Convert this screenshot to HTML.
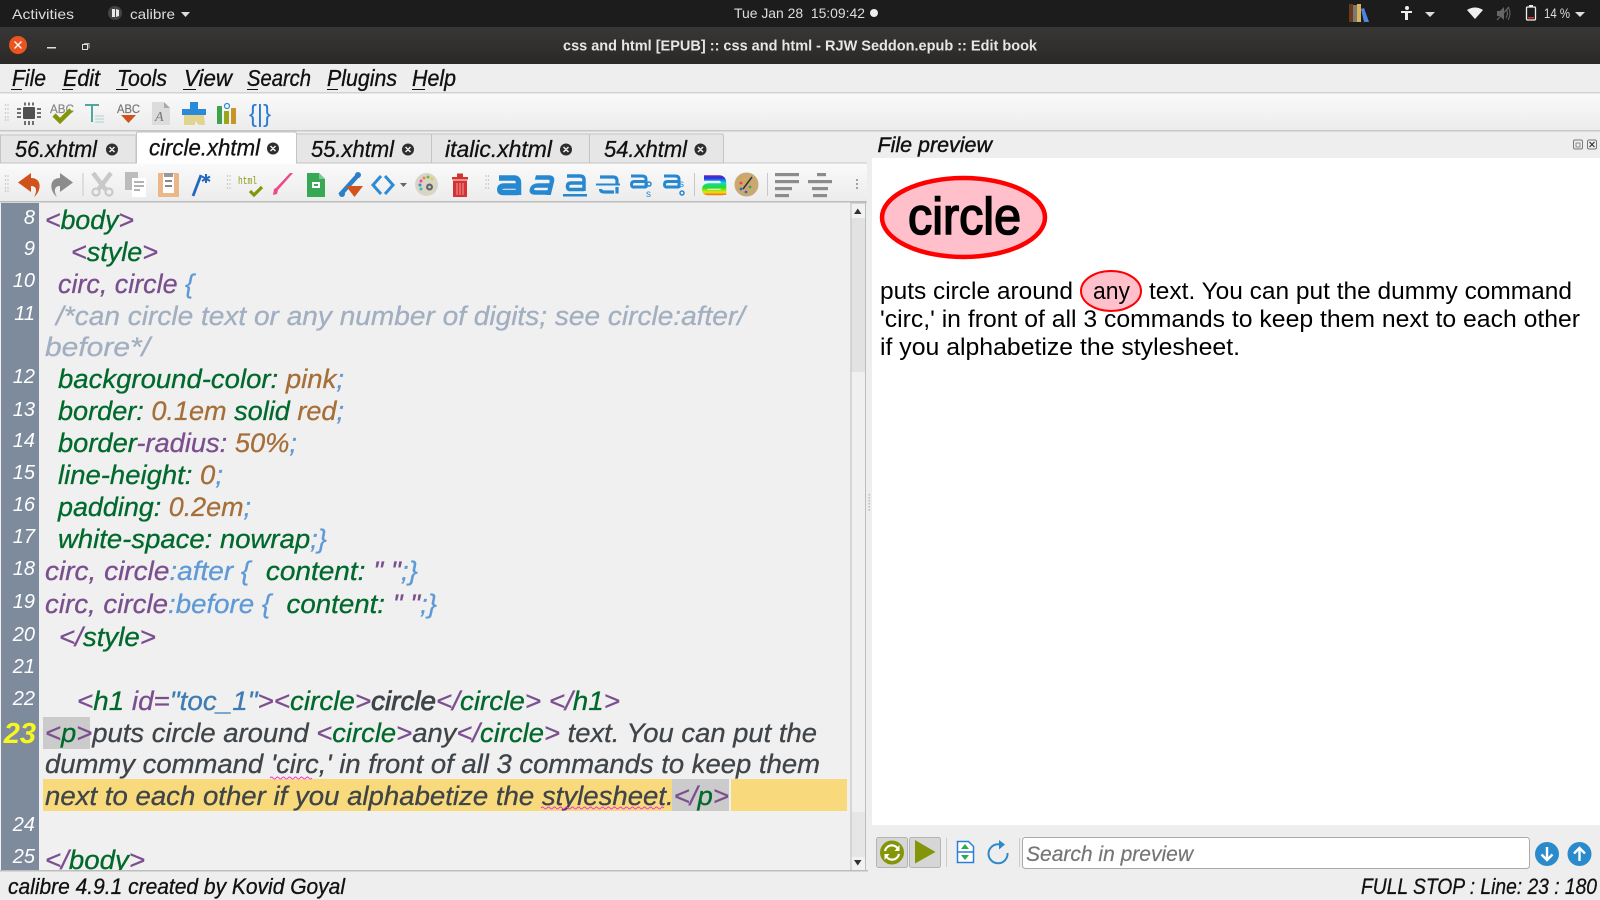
<!DOCTYPE html>
<html><head><meta charset="utf-8"><style>
html,body{margin:0;padding:0;width:1600px;height:900px;overflow:hidden;background:#eee}
svg{display:block;font-family:"Liberation Sans",sans-serif}
text{white-space:pre}
.m{font-style:italic;font-size:23px;fill:#111;stroke:#111;stroke-width:.35}
.c{font-style:italic;font-size:27px;fill:#3f4448;stroke:#3f4448;stroke-width:.3}
.n{font-style:italic;font-size:20px;fill:#fff}
.t{font-style:italic;font-size:23px;fill:#111;stroke:#111;stroke-width:.3}
.p{font-size:24px;fill:#000}
.top{font-size:14px;fill:#ddd}
.g{fill:#00692b;stroke:#00692b}.u{fill:#7b4f8f;stroke:#7b4f8f}.b{fill:#a66f3a;stroke:#a66f3a}.l{fill:#5f9ad6;stroke:#5f9ad6}.k{fill:#a2afc0;stroke:#a2afc0}.d{fill:#3f4448;stroke:#3f4448}.v{fill:#3d7db3;stroke:#3d7db3}
.a{fill:none;stroke:#2788d2}
</style></head><body>
<svg width="1600" height="900" viewBox="0 0 1600 900" xmlns="http://www.w3.org/2000/svg">
<defs>
<linearGradient id="tb" x1="0" y1="0" x2="0" y2="1"><stop offset="0" stop-color="#fafafa"/><stop offset="1" stop-color="#ececec"/></linearGradient>
<linearGradient id="tt" x1="0" y1="0" x2="0" y2="1"><stop offset="0" stop-color="#393735"/><stop offset="1" stop-color="#2a2927"/></linearGradient>
<linearGradient id="rb" gradientUnits="userSpaceOnUse" x1="0" y1="173" x2="0" y2="197"><stop offset="0" stop-color="#e0108c"/><stop offset=".2" stop-color="#2030e0"/><stop offset=".4" stop-color="#10d0e0"/><stop offset=".6" stop-color="#20e020"/><stop offset=".8" stop-color="#f0e010"/><stop offset="1" stop-color="#f02010"/></linearGradient>
<linearGradient id="sp" x1="0" y1="0" x2="1" y2="0"><stop offset="0" stop-color="#e6e6e6"/><stop offset=".5" stop-color="#fafafa"/><stop offset="1" stop-color="#e6e6e6"/></linearGradient>
</defs>
<rect width="1600" height="900" fill="#eee"/>

<!-- top bar -->
<rect width="1600" height="27" fill="#1c1c1c"/>
<text class="top" x="12" y="19" textLength="62" lengthAdjust="spacingAndGlyphs">Activities</text>
<circle cx="115" cy="13" r="7" fill="#444"/><path d="M112 9h3v8h-3zM116 9l3 1v6l-3 1z" fill="#e8e8e8"/>
<text class="top" x="130" y="19" textLength="45" lengthAdjust="spacingAndGlyphs">calibre</text>
<path d="M181 12h9l-4.500 5z" fill="#ddd"/>
<text class="top" x="734" y="18" textLength="131" lengthAdjust="spacingAndGlyphs">Tue Jan 28  15:09:42</text>
<circle cx="874" cy="13" r="4" fill="#eee"/>
<rect x="1349" y="4" width="4" height="18" fill="#6b3a1a"/><rect x="1353" y="5" width="4" height="17" fill="#7a7a70"/><rect x="1357" y="4" width="4" height="18" fill="#d9b45a"/><path d="M1361 9l3-1 5 14h-5z" fill="#4d86e0"/>
<circle cx="1407" cy="8" r="2" fill="#eee"/><path d="M1401 11h11v2h-4v7h-3v-7h-4z" fill="#eee"/>
<path d="M1425 12h10l-5 5z" fill="#ddd"/>
<path d="M1467 10q8-5 16 0l-8 9z" fill="#eee"/>
<path d="M1497 11h3l4-4v13l-4-4h-3z" fill="#666"/><path d="M1506 9q3 4 0 9M1508 7q4 6 0 13" stroke="#666" stroke-width="1" fill="none"/><path d="M1497 20l12-13" stroke="#666" stroke-width="1.200"/>
<rect x="1526.500" y="7" width="9" height="13" rx="1" fill="none" stroke="#eee" stroke-width="1.300"/><rect x="1529" y="5" width="4" height="2" fill="#eee"/><rect x="1528" y="17" width="6" height="1.500" fill="#e03020"/>
<text class="top" x="1544" y="18" textLength="26" lengthAdjust="spacingAndGlyphs">14 %</text>
<path d="M1575 12h10l-5 5z" fill="#ddd"/>

<!-- title bar -->
<rect y="27" width="1600" height="37" fill="url(#tt)"/>
<circle cx="18" cy="45" r="9" fill="#e95420"/><path d="M14.500 41.500l7 7m0-7l-7 7" stroke="#fff" stroke-width="1.300"/>
<rect x="47" y="47" width="9" height="1.500" fill="#ddd"/>
<rect x="82.500" y="44.500" width="5" height="5" fill="none" stroke="#ddd"/><path d="M84 43.500h5v5" fill="none" stroke="#ddd" stroke-width=".8"/>
<text x="563" y="50.500" font-size="14.500" font-weight="bold" fill="#e6e6e6" textLength="474" lengthAdjust="spacingAndGlyphs">css and html [EPUB] :: css and html - RJW Seddon.epub :: Edit book</text>

<!-- menu -->
<rect y="64" width="1600" height="28" fill="#eeeeee"/>
<rect y="92" width="1600" height="1.500" fill="#d2d2d2"/>
<text class="m" x="12" y="86" textLength="34" lengthAdjust="spacingAndGlyphs">File</text>
<text class="m" x="63" y="86" textLength="37" lengthAdjust="spacingAndGlyphs">Edit</text>
<text class="m" x="117" y="86" textLength="50" lengthAdjust="spacingAndGlyphs">Tools</text>
<text class="m" x="184" y="86" textLength="48" lengthAdjust="spacingAndGlyphs">View</text>
<text class="m" x="247" y="86" textLength="64" lengthAdjust="spacingAndGlyphs">Search</text>
<text class="m" x="327" y="86" textLength="70" lengthAdjust="spacingAndGlyphs">Plugins</text>
<text class="m" x="412" y="86" textLength="44" lengthAdjust="spacingAndGlyphs">Help</text>
<g fill="#111"><rect x="11" y="89" width="11" height="1"/><rect x="62" y="89" width="11" height="1"/><rect x="116" y="89" width="12" height="1"/><rect x="183" y="89" width="13" height="1"/><rect x="247" y="89" width="11" height="1"/><rect x="327" y="89" width="11" height="1"/><rect x="412" y="89" width="13" height="1"/></g>

<!-- toolbar 1 -->
<rect y="93.500" width="1600" height="36.500" fill="url(#tb)"/>
<rect y="130" width="1600" height="1.500" fill="#c8c8c8"/>
<g fill="#bbb"><circle cx="5.500" cy="105" r=".7"/><circle cx="8" cy="105" r=".7"/><circle cx="5.500" cy="109" r=".7"/><circle cx="8" cy="109" r=".7"/><circle cx="5.500" cy="113" r=".7"/><circle cx="8" cy="113" r=".7"/><circle cx="5.500" cy="117" r=".7"/><circle cx="8" cy="117" r=".7"/><circle cx="5.500" cy="120" r=".7"/><circle cx="8" cy="120" r=".7"/></g>
<rect x="23" y="107" width="12" height="12" rx="1" fill="#505050"/>
<path d="M17 109h4M17 113h4M17 117h4M37 109h4M37 113h4M37 117h4M25 102.500v3M29 102.500v3M33 102.500v3M25 121v4M29 121v4M33 121v4" stroke="#444" stroke-width="1.500" fill="none"/>
<text x="50" y="113" font-size="12" fill="#888" stroke="#888" stroke-width=".2" textLength="24" lengthAdjust="spacingAndGlyphs">ABC</text>
<path d="M54 115l6 6 11-11" stroke="#84950a" stroke-width="4.500" fill="none"/>
<path d="M85 105h14M92 105v17" stroke="#4da89e" stroke-width="2" fill="none"/><path d="M95 116h9M95 119h9M95 122h9" stroke="#a6d4cf" stroke-width="1" fill="none"/>
<text x="117" y="113" font-size="12" fill="#777" stroke="#777" stroke-width=".2" textLength="23" lengthAdjust="spacingAndGlyphs">ABC</text>
<path d="M121 115h15l-7.500 8z" fill="#d2521b"/>
<path d="M152 102h12l6 6v17h-18z" fill="#dcdcdc"/><path d="M164 102l6 6h-6z" fill="#aaa"/>
<text x="155" y="121" font-size="14" font-style="italic" font-family="Liberation Serif" fill="#777">A</text>
<path d="M190 102h8v7h8v6h-24v-6h8z" fill="#2b8ad8"/><path d="M184 115h20l1 10h-6l-4-4v4h-11z" fill="#e2d48f"/>
<rect x="217" y="106" width="5" height="18" rx=".5" fill="#3fa34d"/><rect x="224" y="111" width="5" height="13" rx=".5" fill="#9aa51a"/><rect x="231" y="108" width="5" height="16" rx=".5" fill="#c99429"/><circle cx="227" cy="106" r="2.500" fill="none" stroke="#2b8ad8" stroke-width="1.200"/>
<text x="249" y="122" font-size="25" fill="#2a7ad6" textLength="22" lengthAdjust="spacingAndGlyphs">{|}</text>

<!-- tabs -->
<rect y="131.500" width="867" height="31.500" fill="#eeeeee"/>
<rect y="162.500" width="867" height="1" fill="#c8c8c8"/>
<g fill="#e6e6e6" stroke="#c4c4c4"><path d="M.5 163v-28h135.500v28z"/><path d="M296.500 163v-28q0-1 1-1h133q1 0 1 1v28z"/><path d="M431.500 163v-28q0-1 1-1h156q1 0 1 1v28z"/><path d="M589.500 163v-28q0-1 1-1h131q2 0 2 2v27z"/></g>
<path d="M136.500 164v-31q0-1 2-1h156q2 0 2 2v30z" fill="#fff" stroke="#c4c4c4"/>
<text class="t" x="15" y="157" textLength="82" lengthAdjust="spacingAndGlyphs">56.xhtml</text>
<text class="t" x="149" y="155.500" textLength="111" lengthAdjust="spacingAndGlyphs">circle.xhtml</text>
<text class="t" x="311" y="157" textLength="83" lengthAdjust="spacingAndGlyphs">55.xhtml</text>
<text class="t" x="445" y="157" textLength="107" lengthAdjust="spacingAndGlyphs">italic.xhtml</text>
<text class="t" x="604" y="157" textLength="83" lengthAdjust="spacingAndGlyphs">54.xhtml</text>
<g fill="#2e2e2e"><circle cx="112" cy="149.500" r="6"/><circle cx="273" cy="148.500" r="6"/><circle cx="408" cy="149.500" r="6"/><circle cx="566" cy="149.500" r="6"/><circle cx="700.500" cy="149.500" r="6"/></g>
<g stroke="#eee" stroke-width="1.500"><path d="M109.500 147l5 5m0-5l-5 5M270.500 146l5 5m0-5l-5 5M405.500 147l5 5m0-5l-5 5M563.500 147l5 5m0-5l-5 5M698 147l5 5m0-5l-5 5"/></g>

<!-- File preview header -->
<text x="877.500" y="152" font-size="21" font-style="italic" fill="#111" stroke="#111" stroke-width=".45" textLength="114.500" lengthAdjust="spacingAndGlyphs">File preview</text>
<rect x="1573.500" y="140" width="9" height="9" rx="1.500" fill="none" stroke="#777"/><rect x="1576" y="143" width="4" height="4" fill="none" stroke="#777" stroke-width=".8"/>
<rect x="1587.500" y="140" width="9" height="9" rx="1.500" fill="none" stroke="#777"/><path d="M1589.500 142l5 5m0-5l-5 5" stroke="#333" stroke-width="1.200"/>

<!-- toolbar 2 -->
<rect y="163.500" width="867" height="37.500" fill="url(#tb)"/>
<rect y="201" width="867" height="1.500" fill="#bdbdbd"/>
<g fill="#bbb"><circle cx="5.500" cy="176" r=".7"/><circle cx="8" cy="176" r=".7"/><circle cx="5.500" cy="180" r=".7"/><circle cx="8" cy="180" r=".7"/><circle cx="5.500" cy="184" r=".7"/><circle cx="8" cy="184" r=".7"/><circle cx="5.500" cy="188" r=".7"/><circle cx="8" cy="188" r=".7"/><circle cx="5.500" cy="191" r=".7"/><circle cx="8" cy="191" r=".7"/>
<circle cx="227.500" cy="176" r=".7"/><circle cx="230" cy="176" r=".7"/><circle cx="227.500" cy="180" r=".7"/><circle cx="230" cy="180" r=".7"/><circle cx="227.500" cy="184" r=".7"/><circle cx="230" cy="184" r=".7"/><circle cx="227.500" cy="188" r=".7"/><circle cx="230" cy="188" r=".7"/>
<circle cx="486" cy="176" r=".7"/><circle cx="488.500" cy="176" r=".7"/><circle cx="486" cy="180" r=".7"/><circle cx="488.500" cy="180" r=".7"/><circle cx="486" cy="184" r=".7"/><circle cx="488.500" cy="184" r=".7"/><circle cx="486" cy="188" r=".7"/><circle cx="488.500" cy="188" r=".7"/></g>
<path d="M31 173L18 182.500 31 192V186C36 186 38 190 34 197 41 192 43 178 31 178Z" fill="#d0521b"/>
<path d="M60 173L73 182.500 60 192V186C55 186 53 190 57 197 50 192 48 178 60 178Z" fill="#8c8c8c"/>
<rect x="82.500" y="173" width="1" height="23" fill="#c8c8c8"/>
<path d="M93 173l13 17M111 173l-13 17" stroke="#c9c9c9" stroke-width="4.500" fill="none"/><circle cx="96" cy="192" r="3.500" fill="none" stroke="#c9c9c9" stroke-width="2.200"/><circle cx="109" cy="192" r="3.500" fill="none" stroke="#c9c9c9" stroke-width="2.200"/>
<rect x="125" y="172" width="13" height="18" fill="#bcbcbc"/><rect x="132" y="178" width="14" height="19" fill="#fff"/><path d="M134 182h10M134 186h10M134 190h6" stroke="#999" stroke-width="1.500"/>
<rect x="158" y="173" width="21" height="24" rx="1" fill="#ebb788"/><rect x="163" y="174" width="11" height="19" fill="#fff"/><rect x="164" y="173" width="9" height="4" fill="#999"/><path d="M165 181h7M165 186h7" stroke="#888" stroke-width="2"/>
<path d="M193 196l8-21" stroke="#2468bd" stroke-width="2.800"/><path d="M206 174v9M202 176.500l8 4.500M210 176.500l-8 4.500" stroke="#2468bd" stroke-width="2"/>
<text x="238" y="184" font-size="11" font-family="Liberation Mono" fill="#8c9a10" textLength="19" lengthAdjust="spacingAndGlyphs">html</text>
<path d="M250 191l4 4 8-8" stroke="#84950a" stroke-width="3.200" fill="none"/>
<path d="M293 173l-15 17-1 4-4 1 1-6 2-1 14-15z" fill="#f0488c"/>
<path d="M307 173h12l6 6v18h-18z" fill="#37a853"/><path d="M319 173l6 6h-6z" fill="#79c88f"/><rect x="312" y="182" width="8" height="6" fill="#fff"/><rect x="314" y="184" width="4" height="2" fill="#37a853"/>
<path d="M340 195l19-21" stroke="#2a7fc8" stroke-width="4.500"/><circle cx="342" cy="194" r="3" fill="#2a7fc8"/><circle cx="358" cy="175" r="3" fill="#2a7fc8"/><path d="M346 186h17l-8.500 11z" fill="#d2521b"/>
<path d="M381 176l-8 9 8 9M385 176l8 9-8 9" stroke="#2d8bd6" stroke-width="3" fill="none"/>
<path d="M400 183h7l-3.500 4z" fill="#666"/>
<circle cx="426.500" cy="184.500" r="11.500" fill="#d9d6c8"/>
<circle cx="424" cy="178" r="1.500" fill="#e84"/><circle cx="428" cy="177" r="1.500" fill="#6b4"/><circle cx="421" cy="181" r="1.500" fill="#e4a"/><circle cx="420" cy="185" r="1.500" fill="#48c"/><circle cx="421" cy="189" r="1.500" fill="#4bb"/><circle cx="432" cy="179" r="1.500" fill="#ec3"/><circle cx="429.500" cy="187" r="3.500" fill="#666"/><circle cx="429.500" cy="187" r="1.300" fill="#d9d6c8"/>
<path d="M452 177h16v2.500h-16zM457 173.500h6v3.500h-6z" fill="#d63232"/><path d="M453 180.500h14v16.500h-14z" fill="#d63232"/><path d="M457 183v12M460 183v12M463 183v12" stroke="#f0a0a0" stroke-width="1"/>
<g class="a">
<g transform="translate(497 175)" stroke-width="5.500"><path d="M2 3H17Q21.500 3 21.500 8V20"/><path d="M21 11H7Q2.800 11 2.800 14.500T7 17.500H21"/></g>
<g transform="translate(533 175) skewX(-14)" stroke-width="4.500"><path d="M3 2.500H16Q20.500 2.500 20.500 7V20"/><path d="M20 10.500H7Q2.500 10.500 2.500 14T7 17.500H20"/></g>
<g transform="translate(566 174)" stroke-width="3.500"><path d="M1 2H14Q18 2 18 6V17"/><path d="M18 9H5Q1.500 9 1.500 12.500T5 15.500H18"/><path d="M-3 21.300H21" stroke-width="2.500"/></g>
<g transform="translate(599 175)" stroke-width="3.200"><path d="M1 2H14Q18 2 18 6V8.500M18 12V18.500"/><path d="M15 17H5Q1.500 17 1.500 14"/><path d="M-3 9.500H21" stroke-width="2"/></g>
<g transform="translate(630 174)" stroke-width="3"><path d="M1 2H12Q16 2 16 5V14"/><path d="M16 7.500H4.500Q1.500 7.500 1.500 10.500T4.500 13H16"/></g>
<g transform="translate(663 174)" stroke-width="3"><path d="M1 2H12Q16 2 16 5V14"/><path d="M16 7.500H4.500Q1.500 7.500 1.500 10.500T4.500 13H16"/></g>
<circle cx="649" cy="184" r="2" stroke-width="1.500"/><circle cx="682" cy="193" r="2" stroke-width="1.500"/>
</g>
<text x="646" y="197" font-size="10" fill="#2788d2">s</text>
<text x="679" y="187" font-size="10" fill="#2788d2">s</text>
<rect x="694" y="173" width="1" height="23" fill="#c8c8c8"/>
<g transform="translate(702 175)" fill="none" stroke="url(#rb)" stroke-width="5.500"></g>
<path d="M704 178H719Q723.500 178 723.500 183V195M723 186H709Q704.800 186 704.800 189.500T709 192.500H723" fill="none" stroke="url(#rb)" stroke-width="5.500"/>
<circle cx="746.500" cy="184.500" r="12" fill="#c9a871"/>
<path d="M752 177l-9 12" stroke="#333" stroke-width="1.500"/><circle cx="741" cy="183" r="1.400" fill="#e44"/><circle cx="744" cy="179" r="1.400" fill="#ea3"/><circle cx="750" cy="187" r="1.400" fill="#3a5"/><circle cx="746" cy="192" r="1.400" fill="#36c"/><circle cx="741" cy="189" r="1.400" fill="#36c"/>
<rect x="767" y="173" width="1" height="23" fill="#c8c8c8"/>
<g fill="#8c8c8c"><rect x="775" y="173" width="24" height="3.200"/><rect x="775" y="180" width="24" height="3.200"/><rect x="775" y="187" width="17" height="3.200"/><rect x="775" y="194" width="14" height="3.200"/>
<rect x="817" y="173" width="9" height="3.200"/><rect x="808" y="180" width="24" height="3.200"/><rect x="812" y="187" width="16" height="3.200"/><rect x="813" y="194" width="14" height="3.200"/></g>
<g fill="#888"><circle cx="857" cy="180" r="1"/><circle cx="857" cy="184" r="1"/><circle cx="857" cy="188" r="1"/></g>

<!-- editor -->
<rect y="203" width="851" height="667" fill="#f0f0f0"/>
<rect x="1" y="203" width="38" height="667" fill="#7d8b9d"/>
<rect x="43" y="779" width="804" height="32" fill="#f8da7c"/>
<rect x="43" y="717" width="47" height="32" fill="#cbcbcb"/>
<rect x="672" y="779" width="57" height="32" fill="#cbcbcb"/>
<rect x="729" y="779" width="2" height="32" fill="#f0f0f0"/>

<g text-anchor="end">
<text class="n" x="35" y="224">8</text><text class="n" x="35" y="255">9</text><text class="n" x="35" y="287">10</text><text class="n" x="35" y="320">11</text><text class="n" x="35" y="383">12</text><text class="n" x="35" y="416">13</text><text class="n" x="35" y="447">14</text><text class="n" x="35" y="479">15</text><text class="n" x="35" y="511">16</text><text class="n" x="35" y="543">17</text><text class="n" x="35" y="575">18</text><text class="n" x="35" y="608">19</text><text class="n" x="35" y="641">20</text><text class="n" x="35" y="673">21</text><text class="n" x="35" y="705">22</text>
<text x="36" y="743" font-size="29" font-style="italic" font-weight="bold" fill="#f8f820">23</text>
<text class="n" x="35" y="831">24</text><text class="n" x="35" y="863">25</text>
</g>

<g>
<text class="c" x="45" y="229" textLength="89" lengthAdjust="spacingAndGlyphs"><tspan class="u">&lt;</tspan><tspan class="g">body</tspan><tspan class="u">&gt;</tspan></text>
<text class="c" x="71" y="261" textLength="87" lengthAdjust="spacingAndGlyphs"><tspan class="u">&lt;</tspan><tspan class="g">style</tspan><tspan class="u">&gt;</tspan></text>
<text class="c" x="58" y="293" textLength="136" lengthAdjust="spacingAndGlyphs"><tspan class="u">circ, circle </tspan><tspan class="l">{</tspan></text>
<text class="c k" x="56" y="325" textLength="689" lengthAdjust="spacingAndGlyphs">/*can circle text or any number of digits; see circle:after/</text>
<text class="c k" x="45" y="356" textLength="105" lengthAdjust="spacingAndGlyphs">before*/</text>
<text class="c" x="58" y="388" textLength="286" lengthAdjust="spacingAndGlyphs"><tspan class="g">background-color</tspan><tspan class="g">:</tspan><tspan class="b"> pink</tspan><tspan class="l">;</tspan></text>
<text class="c" x="58" y="420" textLength="286" lengthAdjust="spacingAndGlyphs"><tspan class="g">border</tspan><tspan class="g">:</tspan><tspan class="b"> 0.1em</tspan><tspan class="g"> solid</tspan><tspan class="b"> red</tspan><tspan class="l">;</tspan></text>
<text class="c" x="58" y="452" textLength="239" lengthAdjust="spacingAndGlyphs"><tspan class="g">border</tspan><tspan class="u">-radius:</tspan><tspan class="b"> 50%</tspan><tspan class="l">;</tspan></text>
<text class="c" x="58" y="484" textLength="165" lengthAdjust="spacingAndGlyphs"><tspan class="g">line-height</tspan><tspan class="g">:</tspan><tspan class="b"> 0</tspan><tspan class="l">;</tspan></text>
<text class="c" x="58" y="516" textLength="193" lengthAdjust="spacingAndGlyphs"><tspan class="g">padding</tspan><tspan class="g">:</tspan><tspan class="b"> 0.2em</tspan><tspan class="l">;</tspan></text>
<text class="c" x="58" y="548" textLength="269" lengthAdjust="spacingAndGlyphs"><tspan class="g">white-space</tspan><tspan class="g">:</tspan><tspan class="g"> nowrap</tspan><tspan class="l">;}</tspan></text>
<text class="c" x="45" y="580" textLength="373" lengthAdjust="spacingAndGlyphs"><tspan class="u">circ, circle</tspan><tspan class="l">:after {  </tspan><tspan class="g">content</tspan><tspan class="g">:</tspan><tspan class="u"> " "</tspan><tspan class="l">;}</tspan></text>
<text class="c" x="45" y="613" textLength="392" lengthAdjust="spacingAndGlyphs"><tspan class="u">circ, circle</tspan><tspan class="l">:before {  </tspan><tspan class="g">content</tspan><tspan class="g">:</tspan><tspan class="u"> " "</tspan><tspan class="l">;}</tspan></text>
<text class="c" x="59" y="646" textLength="97" lengthAdjust="spacingAndGlyphs"><tspan class="u">&lt;/</tspan><tspan class="g">style</tspan><tspan class="u">&gt;</tspan></text>
<text class="c" x="77" y="710" textLength="543" lengthAdjust="spacingAndGlyphs"><tspan class="u">&lt;</tspan><tspan class="g">h1</tspan><tspan class="u"> id=</tspan><tspan class="v">"toc_1"</tspan><tspan class="u">&gt;&lt;</tspan><tspan class="g">circle</tspan><tspan class="u">&gt;</tspan><tspan class="d" stroke-width=".8">circle</tspan><tspan class="u">&lt;/</tspan><tspan class="g">circle</tspan><tspan class="u">&gt;</tspan> <tspan class="u">&lt;/</tspan><tspan class="g">h1</tspan><tspan class="u">&gt;</tspan></text>
<text class="c" x="45" y="742" textLength="772" lengthAdjust="spacingAndGlyphs"><tspan class="u">&lt;</tspan><tspan class="g">p</tspan><tspan class="u">&gt;</tspan>puts circle around <tspan class="u">&lt;</tspan><tspan class="g">circle</tspan><tspan class="u">&gt;</tspan>any<tspan class="u">&lt;/</tspan><tspan class="g">circle</tspan><tspan class="u">&gt;</tspan> text. You can put the</text>
<text class="c" x="45" y="773" textLength="775" lengthAdjust="spacingAndGlyphs">dummy command 'circ,' in front of all 3 commands to keep them</text>
<text class="c" x="45" y="805" textLength="684" lengthAdjust="spacingAndGlyphs">next to each other if you alphabetize the stylesheet.<tspan class="u">&lt;/</tspan><tspan class="g">p</tspan><tspan class="u">&gt;</tspan></text>
<text class="c" x="45" y="869" textLength="100" lengthAdjust="spacingAndGlyphs"><tspan class="u">&lt;/</tspan><tspan class="g">body</tspan><tspan class="u">&gt;</tspan></text>
</g>
<rect y="870" width="868" height="30" fill="#eee"/>
<rect y="870" width="868" height="1.500" fill="#bdbdbd"/>
<path d="M270 778q1.500-2 3 0t3 0 3 0 3 0 3 0 3 0 3 0 3 0 3 0 3 0 3 0 3 0 3 0 3 0" stroke="#f030e0" fill="none" stroke-width="1"/>
<path d="M541 808q1.500-2 3 0t3 0 3 0 3 0 3 0 3 0 3 0 3 0 3 0 3 0 3 0 3 0 3 0 3 0 3 0 3 0 3 0 3 0 3 0 3 0 3 0 3 0 3 0 3 0 3 0 3 0 3 0 3 0 3 0 3 0 3 0 3 0 3 0 3 0 3 0 3 0 3 0 3 0 3 0 3 0 3 0" stroke="#f030e0" fill="none" stroke-width="1"/>

<!-- scrollbar -->
<rect x="851" y="203" width="14.500" height="667" fill="#f0f0f0" stroke="#bdbdbd" stroke-width="1"/>
<rect x="851.500" y="218" width="13.500" height="154" fill="#e2e2e2"/>
<rect x="851.500" y="812" width="13.500" height="45" fill="#e6e6e6"/>
<rect x="851.500" y="204" width="13.500" height="14" fill="#f2f2f2"/><rect x="851.500" y="857" width="13.500" height="13" fill="#f2f2f2"/>
<path d="M854 214h7.500l-3.750-5.500z" fill="#333"/><path d="M854 860h7.500l-3.750 5.500z" fill="#333"/>
<g fill="#bbb"><rect x="868.500" y="494" width="1.500" height="1.500"/><rect x="868.500" y="497" width="1.500" height="1.500"/><rect x="868.500" y="500" width="1.500" height="1.500"/><rect x="868.500" y="503" width="1.500" height="1.500"/><rect x="868.500" y="506" width="1.500" height="1.500"/><rect x="868.500" y="509" width="1.500" height="1.500"/></g>

<!-- preview -->
<rect x="872" y="158" width="728" height="667" fill="#fff"/>
<ellipse cx="963.500" cy="217.500" rx="81.500" ry="39.500" fill="#ffc0cb" stroke="#f00" stroke-width="4.500"/>
<text x="908" y="234" font-size="52" fill="#000" stroke="#000" stroke-width="1.600" textLength="113" lengthAdjust="spacingAndGlyphs">circle</text>
<ellipse cx="1111" cy="291" rx="30" ry="20" fill="#ffc0cb" stroke="#f00" stroke-width="2"/>
<text class="p" x="880" y="299" textLength="193" lengthAdjust="spacingAndGlyphs">puts circle around</text>
<text class="p" x="1093" y="299" textLength="37" lengthAdjust="spacingAndGlyphs">any</text>
<text class="p" x="1149" y="299" textLength="423" lengthAdjust="spacingAndGlyphs">text. You can put the dummy command</text>
<text class="p" x="880" y="327" textLength="700" lengthAdjust="spacingAndGlyphs">'circ,' in front of all 3 commands to keep them next to each other</text>
<text class="p" x="880" y="355" textLength="360" lengthAdjust="spacingAndGlyphs">if you alphabetize the stylesheet.</text>

<!-- preview bottom bar -->
<rect x="876.500" y="837.500" width="31" height="30" rx="2" fill="#d6d6d6" stroke="#b4b4b4"/>
<rect x="909.500" y="837.500" width="31" height="30" rx="2" fill="#d6d6d6" stroke="#b4b4b4"/>
<circle cx="892" cy="852.500" r="12" fill="#84950a"/>
<path d="M885 851a7 7 0 0 1 13-2M899 854a7 7 0 0 1-13 2" stroke="#fff" stroke-width="2.200" fill="none"/><path d="M899.500 845v6h-5zM884.500 860v-6h5z" fill="#fff"/>
<path d="M915 840l20.500 12-20.500 11.500z" fill="#84950a"/>
<rect x="946" y="838" width="1" height="29" fill="#ccc"/>
<path d="M957.500 841.500h11l5 5v16h-16z" fill="#fff" stroke="#2a7fd6" stroke-width="1.500"/><path d="M957 852h17" stroke="#2a7fd6" stroke-width="1.500"/><path d="M961 849l4-5 4 5zM961 855h8l-4 5z" fill="#2fa84f"/>
<path d="M1000 844.500A9.500 9.500 0 1 0 1007.500 853" fill="none" stroke="#2b8acb" stroke-width="2"/><path d="M999 840v9.500l6-5z" fill="#2b8acb"/>
<rect x="1019" y="838" width="1" height="29" fill="#ccc"/>
<rect x="1022.500" y="837.500" width="507" height="31" rx="3" fill="#fff" stroke="#aaa"/>
<text x="1026" y="861" font-size="21" font-style="italic" fill="#757575" stroke="#757575" stroke-width=".2" textLength="167" lengthAdjust="spacingAndGlyphs">Search in preview</text>
<circle cx="1547" cy="854" r="12" fill="#2b8acb"/><path d="M1547 847v13M1541.500 854.500l5.500 5.500 5.500-5.500" stroke="#fff" stroke-width="2.400" fill="none"/>
<circle cx="1579.500" cy="854" r="12" fill="#2b8acb"/><path d="M1579.500 861v-13M1574 853.500l5.500-5.500 5.500 5.500" stroke="#fff" stroke-width="2.400" fill="none"/>

<!-- status -->
<text x="8" y="894" font-size="22" font-style="italic" fill="#111" stroke="#111" stroke-width=".3" textLength="337" lengthAdjust="spacingAndGlyphs">calibre 4.9.1 created by Kovid Goyal</text>
<text x="1361" y="894" font-size="22" font-style="italic" fill="#111" stroke="#111" stroke-width=".3" textLength="236" lengthAdjust="spacingAndGlyphs">FULL STOP : Line: 23 : 180</text>
</svg>
</body></html>
